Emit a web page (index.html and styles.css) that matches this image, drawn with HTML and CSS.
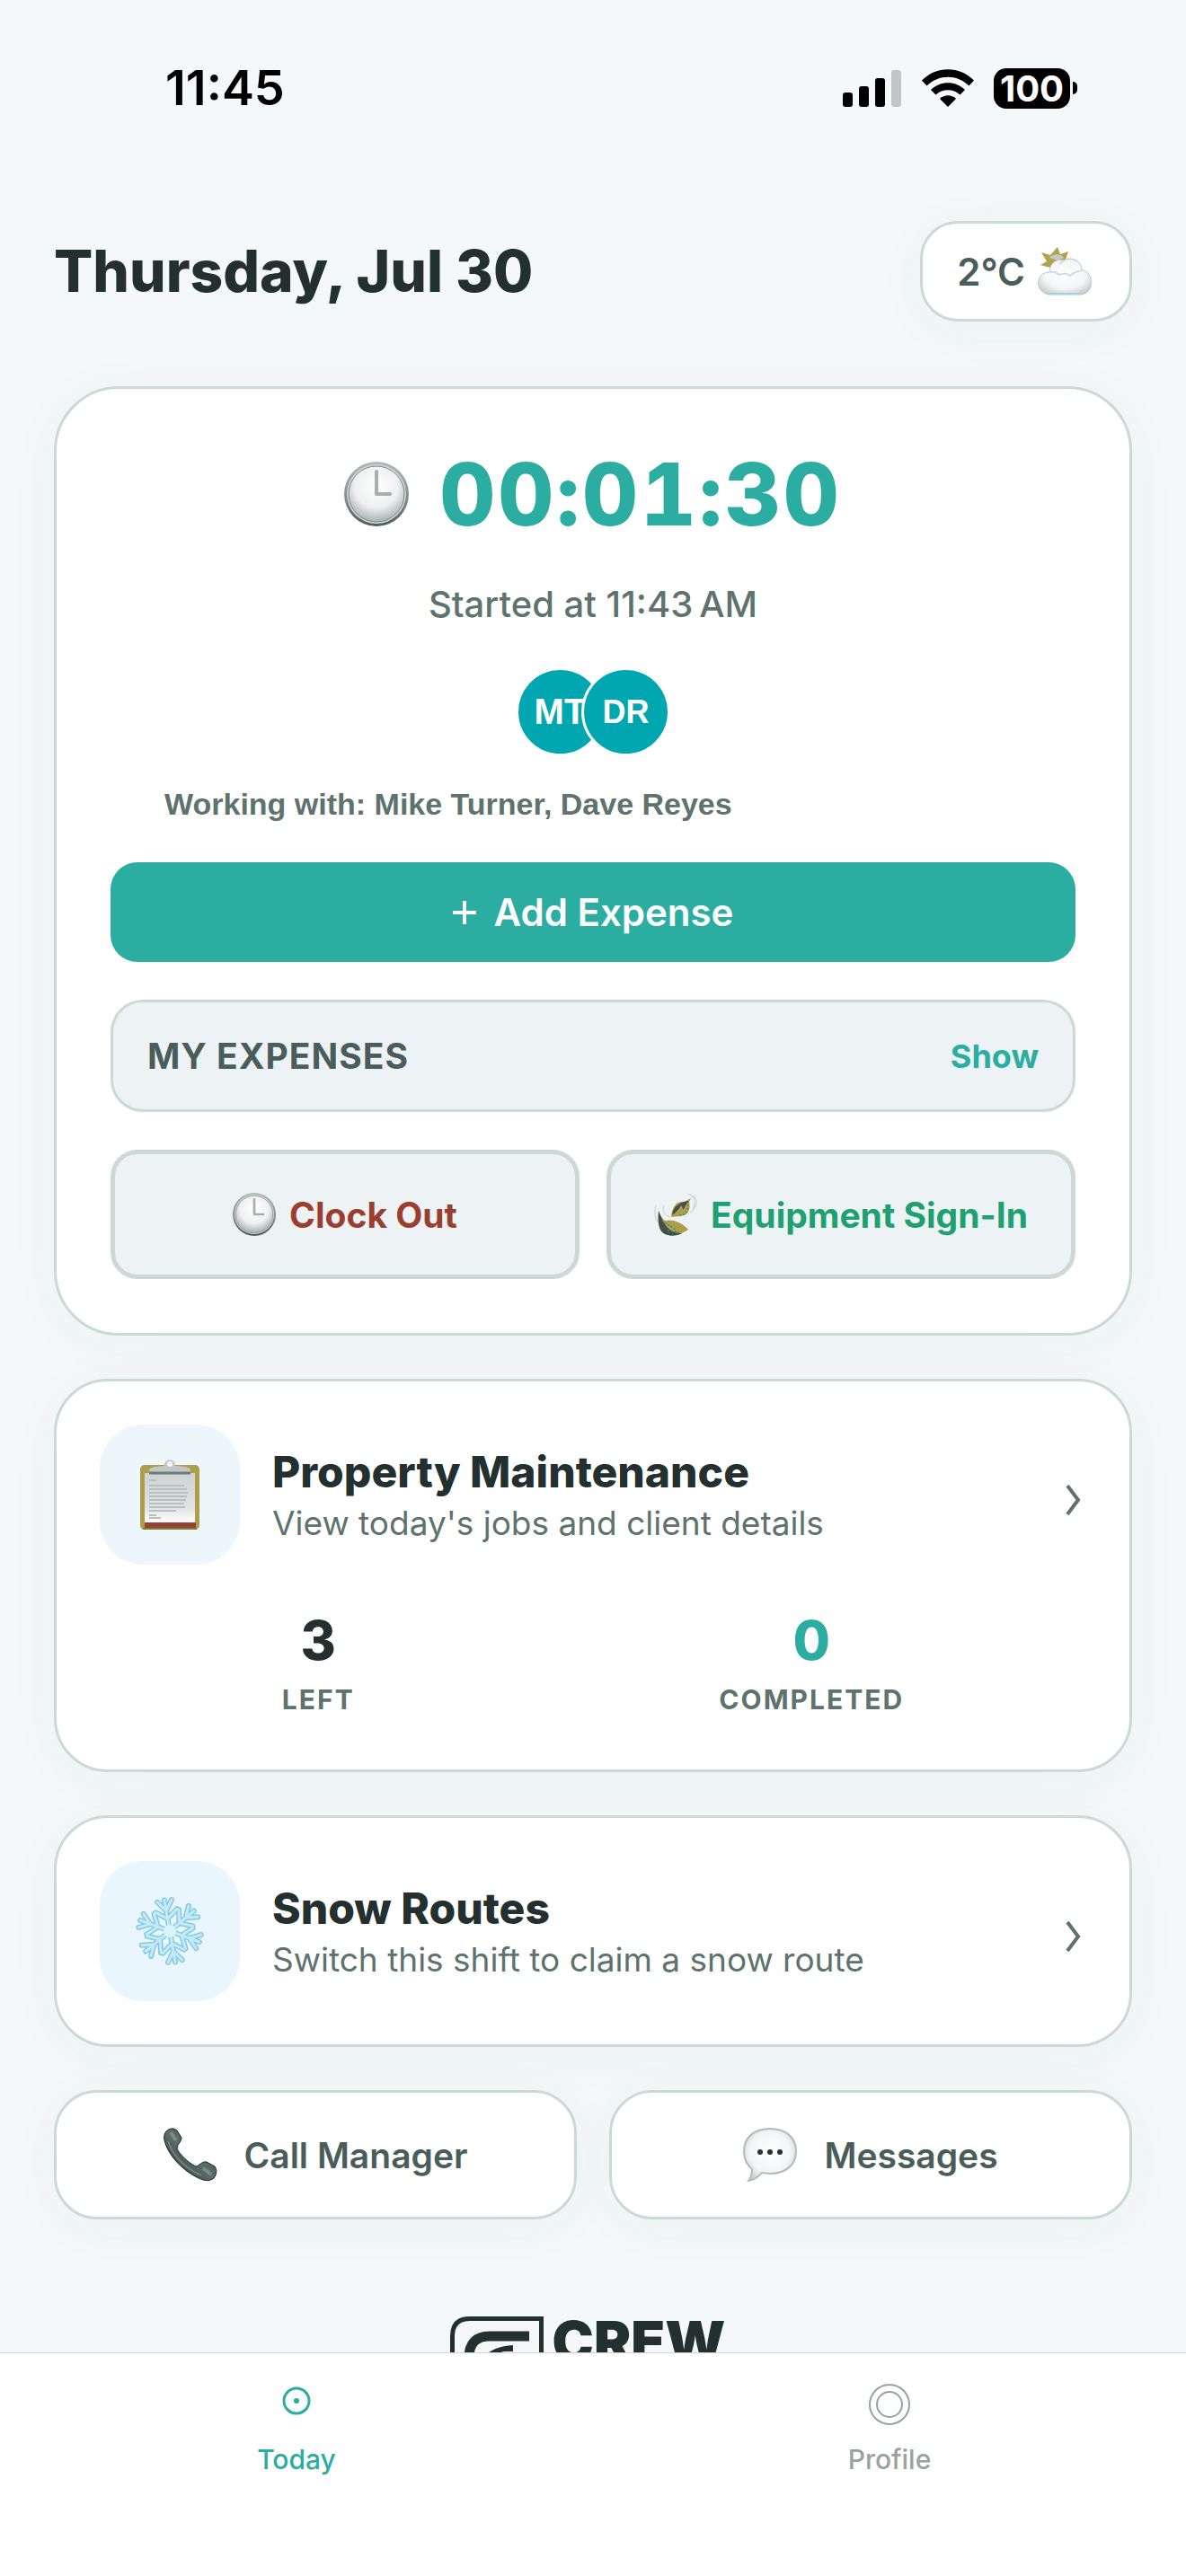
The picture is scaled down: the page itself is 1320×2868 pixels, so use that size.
FILE: index.html
```html
<!DOCTYPE html>
<html lang="en">
<head>
<meta charset="utf-8">
<meta name="viewport" content="width=device-width, initial-scale=1">
<title>Today</title>
<link rel="stylesheet" href="styles.css">
</head>
<body>
<svg class="defs" aria-hidden="true">
  <defs>
    <linearGradient id="rim" x1="0" y1="0" x2="0" y2="1"><stop offset="0" stop-color="#b4bab9"/><stop offset=".6" stop-color="#7f8a88"/><stop offset="1" stop-color="#4f5c5a"/></linearGradient>
    <radialGradient id="face" cx=".5" cy=".35" r=".65"><stop offset="0" stop-color="#ffffff"/><stop offset=".6" stop-color="#eef1f1"/><stop offset="1" stop-color="#a9b2b0"/></radialGradient>
    <radialGradient id="puff" cx=".5" cy=".45" r=".6"><stop offset="0" stop-color="#ffffff"/><stop offset=".65" stop-color="#f3f5f6"/><stop offset="1" stop-color="#c9d0d1"/></radialGradient>
    <linearGradient id="paper" x1="0" y1="0" x2="0" y2="1"><stop offset="0" stop-color="#cdd4d3"/><stop offset=".7" stop-color="#dfe3e3"/><stop offset="1" stop-color="#ffffff"/></linearGradient>
    <linearGradient id="handset" x1="0" y1="1" x2="1" y2="0"><stop offset="0" stop-color="#1f2c2b"/><stop offset=".5" stop-color="#5d6e6b"/><stop offset="1" stop-color="#2b3a38"/></linearGradient>
    <symbol id="clock" viewBox="0 0 72 72">
      <circle cx="36" cy="36" r="36" fill="url(#rim)"/>
      <circle cx="36" cy="36" r="33" fill="#d3d8d7"/>
      <circle cx="36" cy="36" r="31" fill="url(#face)" stroke="#7d8886" stroke-width="1"/>
      <path d="M36 11V36H51" fill="none" stroke="#a7aead" stroke-width="4" stroke-linecap="round" stroke-linejoin="round"/>
    </symbol>
    <g id="snow-arm">
      <path d="M0 0V-35M0 -14L-12 -23M0 -14L12 -23M0 -23L-8 -34M0 -23L8 -34"/>
    </g>
  </defs>
</svg>

<header class="status">
  <time class="status-time">11:45</time>
  <div class="status-icons">
    <svg width="66" height="42" viewBox="0 0 66 42" role="img" aria-label="Signal">
      <rect x="0" y="26" width="11" height="16" rx="3"/><rect x="18" y="19" width="11" height="23" rx="3"/><rect x="36" y="10" width="11" height="32" rx="3"/><rect x="54" y="1" width="11" height="41" rx="3" fill="#c3c6c6"/>
    </svg>
    <svg width="58" height="42" viewBox="0 0 58 42" role="img" aria-label="Wi-Fi">
      <path d="M0 12.500C16-4 42-4 58 12.500L52.500 18.500C39 5.500 19 5.500 5.500 18.500Z"/>
      <path d="M10 23C20.500 12.500 37.500 12.500 48 23L42.500 28.500C35 21.500 23 21.500 15.500 28.500Z"/>
      <path d="M20 33C25 28 33 28 38 33L29 42Z"/>
    </svg>
    <div class="battery"><span class="battery-level">100</span><span class="battery-tip"></span></div>
  </div>
</header>

<main class="page">
  <div class="heading">
    <h1>Thursday, Jul 30</h1>
    <button class="weather" type="button">2°C
      <svg width="60" height="54" viewBox="0 0 60 54" aria-hidden="true">
        <path d="M22 0L25 8L34 5L31 14L20 24L10 22L3 20L10 16L4 6L14 9Z" fill="#b3a24c"/>
        <path d="M13 12C17 7 26 7 29 12L22 15Z" fill="#c9c9c4"/>
        <path d="M13 53C-4 51-3 28 13 28C13 17 23 12 29 15C37 10 49 15 49 26C63 27 64 51 48 53Z" fill="url(#puff)" stroke="#bcc5c6" stroke-width="1"/>
        <path d="M14 28Q20 27 24 31Q32 28 36 32Q41 27 48 27M29 15L24 19" fill="none" stroke="#d5dadb" stroke-width="2"/>
        <path d="M12 52H49" stroke="#a8d4df" stroke-width="2"/>
      </svg>
    </button>
  </div>

  <section class="card shift">
    <div class="timer">
      <svg class="timer-icon" aria-hidden="true"><use href="#clock"/></svg>
      <span class="timer-value">00:01:30</span>
    </div>
    <p class="started">Started at 11:43&#8239;AM</p>
    <div class="crew"><span class="avatar">MT</span><span class="avatar avatar-small">DR</span></div>
    <p class="working">Working with: Mike Turner, Dave Reyes</p>
    <div class="actions">
      <button class="add" type="button">
        <svg width="26" height="26" viewBox="0 0 26 26" aria-hidden="true"><path d="M13 0V26M0 13H26" stroke="#fff" stroke-width="4"/></svg>
        Add Expense
      </button>
      <button class="expenses" type="button"><span class="expenses-title">MY EXPENSES</span><span class="expenses-toggle">Show</span></button>
      <div class="pair">
        <button class="soft clock-out" type="button"><svg class="small-icon" aria-hidden="true"><use href="#clock"/></svg>Clock Out</button>
        <button class="soft equipment" type="button">
          <svg class="small-icon" viewBox="0 0 48 48" aria-hidden="true">
            <path d="M2 14Q-2 28 8 37M11 14Q8 24 18 27M38 1Q49 6 43 18M44 3Q52 12 40 22" fill="none" stroke="#d3dbda" stroke-width="1.500"/>
            <path d="M5 20Q7 27 12 31C21 29 31 33 38 41C29 47 20 49 12 46C5 42 4 33 5 20Z" fill="#ae9d4b"/>
            <path d="M5 20C4 34 5 42 12 46C19 49 26 48 31 45Q18 46 10 32Z" fill="#46504b"/>
            <path d="M12 33L24 41M15 42L28 44" stroke="#269c70" stroke-width="1.500" stroke-dasharray="2 2"/>
            <path d="M19 27C20 15 25 9 33 10L41 6L39 10C41 19 37 26 29 26Z" fill="#ae9d4b"/>
            <path d="M20 25C22 14 28 11 39 9Q34 14 33 19L30 14Q27 20 20 25Z" fill="#46504b"/>
            <path d="M28 25Q38 25 38 13" fill="none" stroke="#269c70" stroke-width="1.500" stroke-dasharray="2 2"/>
          </svg>Equipment Sign-In</button>
      </div>
    </div>
  </section>

  <a class="card job" href="#property">
    <span class="job-head">
      <span class="tile">
        <svg width="66" height="78" viewBox="0 0 66 78" aria-hidden="true">
          <rect x="0" y="6" width="66" height="72" rx="5" fill="#ae9d4b"/>
          <path d="M3 77H63" stroke="#82763d" stroke-width="2"/>
          <rect x="5" y="70" width="57" height="6" fill="#93432f"/>
          <rect x="5" y="15" width="56" height="55" fill="url(#paper)"/>
          <path d="M10 23H18M10 29H49M10 33H52M10 37H53M10 41H52M10 45H51M10 49H49M10 53H50M10 57H40M10 62H18M10 65H23" stroke="#b9c0bf" stroke-width="2"/>
          <path d="M10 15C9 8 14 8 27 7C27-2 39-2 39 7C52 8 57 8 56 15Z" fill="#c2c6c5"/>
          <path d="M10 15H56" stroke="#707b79" stroke-width="3"/>
          <circle cx="33" cy="5" r="3" fill="#f3f8fa"/>
        </svg>
      </span>
      <span class="job-text"><strong class="job-title">Property Maintenance</strong><span class="job-sub">View today's jobs and client details</span></span>
      <svg class="chevron" width="18" height="34" viewBox="0 0 18 34" aria-hidden="true"><path d="M3 1L15 17L3 33"/></svg>
    </span>
    <span class="stats">
      <span class="stat"><b class="stat-value">3</b><span class="stat-label">LEFT</span></span>
      <span class="stat"><b class="stat-value done">0</b><span class="stat-label">COMPLETED</span></span>
    </span>
  </a>

  <a class="card job" href="#snow">
    <span class="job-head">
      <span class="tile tile-snow">
        <svg width="80" height="80" viewBox="-40 -40 80 80" fill="none" stroke-linecap="round" aria-hidden="true">
          <g transform="rotate(-10)">
            <g stroke="#86c9dd" stroke-width="6"><use href="#snow-arm"/><use href="#snow-arm" transform="rotate(60)"/><use href="#snow-arm" transform="rotate(120)"/><use href="#snow-arm" transform="rotate(180)"/><use href="#snow-arm" transform="rotate(240)"/><use href="#snow-arm" transform="rotate(300)"/></g>
            <g stroke="#c3ebf7" stroke-width="3"><use href="#snow-arm"/><use href="#snow-arm" transform="rotate(60)"/><use href="#snow-arm" transform="rotate(120)"/><use href="#snow-arm" transform="rotate(180)"/><use href="#snow-arm" transform="rotate(240)"/><use href="#snow-arm" transform="rotate(300)"/></g>
          </g>
          <circle r="7" fill="#d9f4fb"/>
        </svg>
      </span>
      <span class="job-text"><strong class="job-title">Snow Routes</strong><span class="job-sub">Switch this shift to claim a snow route</span></span>
      <svg class="chevron" width="18" height="34" viewBox="0 0 18 34" aria-hidden="true"><path d="M3 1L15 17L3 33"/></svg>
    </span>
  </a>

  <div class="contact">
    <button class="contact-button" type="button">
      <svg width="60" height="60" viewBox="0 0 60 60" aria-hidden="true">
        <path d="M3 4C7 0 12 0 15 3L20 11C20 16 15 18 15 23C18 30 28 39 36 43C40 42 43 37 48 38L57 43C60 47 59 52 56 56C51 60 45 59 39 56C20 47 5 30 1 14C0 10 1 6 3 4Z" fill="url(#handset)" stroke="#1c2827" stroke-width="1"/>
        <path d="M5 15C10 31 24 45 42 53" fill="none" stroke="#71817e" stroke-width="2"/>
        <path d="M8 5L14 14M44 45L53 52" stroke="#7c8987" stroke-width="4"/>
      </svg>
      Call Manager
    </button>
    <button class="contact-button" type="button">
      <svg width="60" height="60" viewBox="0 0 60 60" aria-hidden="true">
        <path d="M30 1C48 1 59 11 59 26C59 41 48 51 30 51L21 50C17 55 12 58 6 59C9 55 10 51 10 46C4 41 1 35 1 26C1 11 12 1 30 1Z" fill="url(#puff)" stroke="#b3bbba" stroke-width="2"/>
        <circle cx="19" cy="27" r="3" fill="#263331"/><circle cx="30" cy="27" r="3" fill="#263331"/><circle cx="41" cy="27" r="3" fill="#263331"/>
      </svg>
      Messages
    </button>
  </div>

  <div class="brand">
    <svg width="104" height="104" viewBox="0 0 104 104" aria-hidden="true">
      <path d="M101.500 2.500V101.500H2.500V22Q2.500 2.500 22 2.500Z" fill="none" stroke="#24302f" stroke-width="5"/>
      <path d="M88 22H44Q21 22 21 46V82H83V58H58" fill="none" stroke="#24302f" stroke-width="11"/>
      <path d="M70 32V39H60Q54 40 50 46H36Q48 33 70 32Z" fill="#24302f"/>
    </svg>
    <span class="brand-name">CREW</span>
  </div>
</main>

<nav class="tabs">
  <a class="tab active" href="#today">
    <svg width="48" height="48" viewBox="0 0 48 48" aria-hidden="true"><circle cx="24" cy="21" r="14" fill="none" stroke="currentColor" stroke-width="3"/><circle cx="24" cy="21" r="3" fill="currentColor"/></svg>
    Today
  </a>
  <a class="tab" href="#profile">
    <svg width="48" height="48" viewBox="0 0 48 48" aria-hidden="true"><circle cx="24" cy="25" r="22" fill="none" stroke="currentColor" stroke-width="2"/><circle cx="24" cy="25" r="14" fill="none" stroke="currentColor" stroke-width="2"/></svg>
    Profile
  </a>
</nav>
</body>
</html>
```
FILE: styles.css
```css
:root {
  --ink: #24302f;
  --ink-soft: #4a5d5a;
  --muted: #5e726e;
  --line: #cdd9d6;
  --teal: #2bada1;
  --panel: #edf3f4;
  --bg: #f4f8f9;
  --shadow: 0 8px 60px rgba(40, 70, 70, 0.04);
}

* { box-sizing: border-box; }

body {
  margin: 0;
  background: var(--bg);
  color: var(--ink);
  font-family: Inter, "Liberation Sans", sans-serif;
}

h1, p { margin: 0; }
a { color: inherit; text-decoration: none; }
button { font: inherit; color: inherit; margin: 0; padding: 0; border: 0; cursor: pointer; }
svg { display: block; flex: none; }
.defs { position: absolute; width: 0; height: 0; }

/* Status bar */
.status {
  display: flex;
  justify-content: space-between;
  align-items: center;
  padding: 66px 121px 62px 184px;
  color: #000;
}
.status-time { font-size: 54px; line-height: 64px; font-weight: 600; }
.status-icons { display: flex; align-items: center; gap: 22px; }
.battery { display: flex; align-items: center; gap: 3px; }
.battery-level {
  width: 85px;
  border-radius: 14px;
  background: #000;
  color: #fff;
  font-size: 40px;
  line-height: 45px;
  font-weight: 700;
  text-align: center;
}
.battery-tip { width: 5px; height: 14px; border-radius: 0 5px 5px 0; background: #000; }

/* Page */
.page {
  display: flex;
  flex-direction: column;
  gap: 48px;
  padding: 54px 60px 150px;
}
.heading {
  display: flex;
  justify-content: space-between;
  align-items: center;
  margin-bottom: 24px;
}
h1 { font-size: 64px; line-height: 78px; font-weight: 800; }
.weather {
  display: flex;
  align-items: center;
  gap: 14px;
  min-height: 112px;
  padding: 0 42px 0 38px;
  border: 3px solid var(--line);
  border-radius: 42px;
  background: #fff;
  box-shadow: var(--shadow);
  color: var(--ink-soft);
  font-size: 42px;
  font-weight: 600;
}

.card {
  display: block;
  border: 3px solid var(--line);
  border-radius: 60px;
  background: #fff;
  box-shadow: var(--shadow);
}

/* Shift card */
.shift { padding: 60px; border-radius: 72px; }
.timer { display: flex; justify-content: center; align-items: center; gap: 34px; }
.timer-icon { width: 72px; height: 72px; }
.timer-value {
  color: var(--teal);
  font-size: 96px;
  line-height: 114px;
  font-weight: 800;
  font-variant-numeric: tabular-nums;
  letter-spacing: 3px;
}
.started {
  margin-top: 42px;
  color: var(--muted);
  font-size: 40px;
  line-height: 48px;
  font-weight: 500;
  text-align: center;
}
.crew { display: flex; justify-content: center; margin-top: 46px; }
.avatar {
  width: 99px;
  height: 99px;
  border: 3px solid #fff;
  border-radius: 50%;
  background: #00a7b0;
  color: #fff;
  font: 700 40px/93px "Liberation Sans", sans-serif;
  text-align: center;
}
.avatar + .avatar { margin-left: -26px; }
.avatar-small { font-size: 36px; }
.working {
  margin-top: 32px;
  padding-left: 60px;
  color: var(--muted);
  font: 700 34px/42px "Liberation Sans", sans-serif;
}
.actions { display: flex; flex-direction: column; gap: 42px; margin-top: 44px; }
.add {
  display: flex;
  justify-content: center;
  align-items: center;
  gap: 20px;
  min-height: 111px;
  border-radius: 30px;
  background: var(--teal);
  color: #fff;
  font-size: 42px;
  font-weight: 600;
}
.expenses {
  display: flex;
  justify-content: space-between;
  align-items: center;
  min-height: 125px;
  padding: 0 38px;
  border: 3px solid var(--line);
  border-radius: 36px;
  background: var(--panel);
}
.expenses-title { color: var(--ink-soft); font-size: 39px; font-weight: 700; letter-spacing: 1px; }
.expenses-toggle { color: var(--teal); font-size: 36px; font-weight: 700; }
.pair { display: grid; grid-template-columns: 1fr 1fr; gap: 30px; }
.soft {
  display: flex;
  justify-content: center;
  align-items: center;
  gap: 15px;
  min-height: 144px;
  border: 5px solid var(--line);
  border-radius: 30px;
  background: var(--panel);
  font-size: 39px;
  font-weight: 700;
  white-space: nowrap;
}
.small-icon { width: 48px; height: 48px; }
.clock-out { color: #9a3f30; }
.equipment { color: #20a070; }

/* Job cards */
.job { padding: 48px; }
.job-head { display: flex; align-items: center; }
.tile {
  display: grid;
  place-items: center;
  flex: none;
  width: 156px;
  height: 156px;
  border-radius: 48px;
  background: #edf6fb;
}
.tile-snow { background: #eaf6fe; }
.job-text { display: flex; flex-direction: column; flex: 1; gap: 3px; margin-left: 36px; }
.job-title { font-size: 48px; line-height: 60px; font-weight: 800; }
.job-sub { color: var(--muted); font-size: 37px; line-height: 48px; }
.chevron { margin: 12px 6px 0 0; fill: none; stroke: var(--muted); stroke-width: 4; }
.stats { display: flex; justify-content: space-around; padding: 48px 0 12px; }
.stat { display: flex; flex-direction: column; align-items: center; gap: 12px; }
.stat-value { font-size: 60px; line-height: 72px; font-weight: 800; }
.done { color: var(--teal); }
.stat-label { color: var(--muted); font-size: 30px; line-height: 36px; font-weight: 700; letter-spacing: 2px; }

/* Contact buttons */
.contact { display: grid; grid-template-columns: 1fr 1fr; gap: 36px; }
.contact-button {
  display: flex;
  justify-content: center;
  align-items: center;
  gap: 30px;
  min-height: 144px;
  border: 3px solid var(--line);
  border-radius: 48px;
  background: #fff;
  box-shadow: var(--shadow);
  color: var(--ink-soft);
  font-size: 39px;
  font-weight: 600;
}

.brand { display: flex; justify-content: center; gap: 10px; margin-top: 60px; padding-right: 12px; }
.brand-name { font-size: 62px; line-height: 56px; font-weight: 900; }

/* Tab bar stays over the scrolling page */
.tabs {
  position: fixed;
  inset: auto 0 0;
  display: grid;
  grid-template-columns: 1fr 1fr;
  padding: 32px 0 112px;
  border-top: 1px solid var(--line);
  background: #fff;
}
.tab {
  display: flex;
  flex-direction: column;
  align-items: center;
  gap: 20px;
  color: #98a3a0;
  font-size: 30px;
  line-height: 36px;
  font-weight: 500;
}
.active { color: var(--teal); }
```
